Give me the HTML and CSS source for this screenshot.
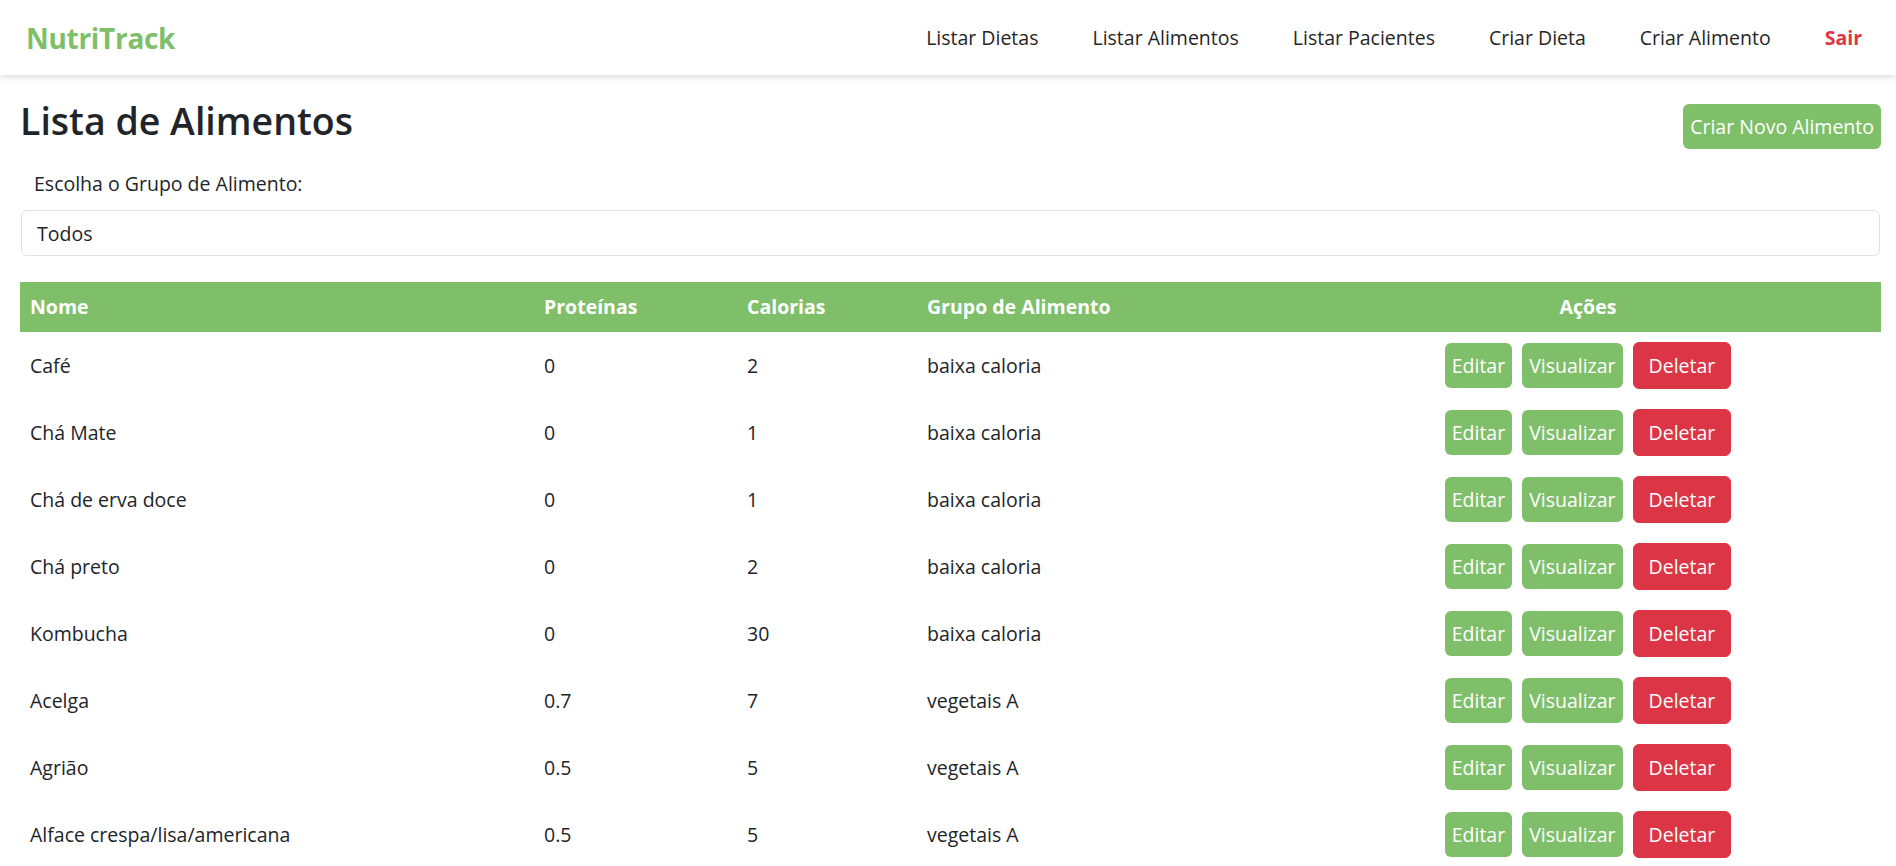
FILE: index.html
```html
<!DOCTYPE html>
<html lang="pt-BR">
<head>
<meta charset="utf-8">
<title>NutriTrack - Lista de Alimentos</title>
<link rel="stylesheet" href="styles.css">
</head>
<body>
<nav class="navbar">
  <a class="brand" href="#">NutriTrack</a>
  <ul class="nav-links">
    <li><a class="nav-link" href="#">Listar Dietas</a></li>
    <li><a class="nav-link" href="#">Listar Alimentos</a></li>
    <li><a class="nav-link" href="#">Listar Pacientes</a></li>
    <li><a class="nav-link" href="#">Criar Dieta</a></li>
    <li><a class="nav-link" href="#">Criar Alimento</a></li>
    <li><a class="nav-link logout" href="#">Sair</a></li>
  </ul>
</nav>
<main class="container">
  <div class="page-head">
    <h1 class="page-title">Lista de Alimentos</h1>
    <a class="btn btn-green btn-create" href="#">Criar Novo Alimento</a>
  </div>
  <label class="filter-label" for="grupo">Escolha o Grupo de Alimento:</label>
  <select class="filter-select" id="grupo"><option>Todos</option></select>
  <table class="food-table">
    <colgroup>
      <col class="c-nome"><col class="c-prot"><col class="c-cal"><col class="c-grupo"><col class="c-acoes">
    </colgroup>
    <thead>
      <tr><th>Nome</th><th>Proteínas</th><th>Calorias</th><th>Grupo de Alimento</th><th class="th-acoes">Ações</th></tr>
    </thead>
    <tbody>
      <tr><td>Café</td><td>0</td><td>2</td><td>baixa caloria</td><td><div class="actions"><a class="btn btn-green" href="#">Editar</a><a class="btn btn-green" href="#">Visualizar</a><a class="btn btn-red" href="#">Deletar</a></div></td></tr>
      <tr><td>Chá Mate</td><td>0</td><td>1</td><td>baixa caloria</td><td><div class="actions"><a class="btn btn-green" href="#">Editar</a><a class="btn btn-green" href="#">Visualizar</a><a class="btn btn-red" href="#">Deletar</a></div></td></tr>
      <tr><td>Chá de erva doce</td><td>0</td><td>1</td><td>baixa caloria</td><td><div class="actions"><a class="btn btn-green" href="#">Editar</a><a class="btn btn-green" href="#">Visualizar</a><a class="btn btn-red" href="#">Deletar</a></div></td></tr>
      <tr><td>Chá preto</td><td>0</td><td>2</td><td>baixa caloria</td><td><div class="actions"><a class="btn btn-green" href="#">Editar</a><a class="btn btn-green" href="#">Visualizar</a><a class="btn btn-red" href="#">Deletar</a></div></td></tr>
      <tr><td>Kombucha</td><td>0</td><td>30</td><td>baixa caloria</td><td><div class="actions"><a class="btn btn-green" href="#">Editar</a><a class="btn btn-green" href="#">Visualizar</a><a class="btn btn-red" href="#">Deletar</a></div></td></tr>
      <tr><td>Acelga</td><td>0.7</td><td>7</td><td>vegetais A</td><td><div class="actions"><a class="btn btn-green" href="#">Editar</a><a class="btn btn-green" href="#">Visualizar</a><a class="btn btn-red" href="#">Deletar</a></div></td></tr>
      <tr><td>Agrião</td><td>0.5</td><td>5</td><td>vegetais A</td><td><div class="actions"><a class="btn btn-green" href="#">Editar</a><a class="btn btn-green" href="#">Visualizar</a><a class="btn btn-red" href="#">Deletar</a></div></td></tr>
      <tr><td>Alface crespa/lisa/americana</td><td>0.5</td><td>5</td><td>vegetais A</td><td><div class="actions"><a class="btn btn-green" href="#">Editar</a><a class="btn btn-green" href="#">Visualizar</a><a class="btn btn-red" href="#">Deletar</a></div></td></tr>
    </tbody>
  </table>
</main>
</body>
</html>
```

FILE: styles.css
```css
* { box-sizing: border-box; }

html, body {
  margin: 0;
  padding: 0;
  background: #ffffff;
}

body {
  font-family: "Open Sans", "Noto Sans", "Liberation Sans", sans-serif;
  font-size: 19.5px;
  line-height: 30px;
  color: #212529;
  overflow: hidden;
}

a { text-decoration: none; }

.navbar {
  height: 75px;
  display: flex;
  align-items: center;
  justify-content: space-between;
  padding: 0 34px 0 26px;
  background: #ffffff;
  box-shadow: 0 2px 6px rgba(0, 0, 0, 0.14);
  position: relative;
  z-index: 2;
}

.brand {
  font-size: 28px;
  font-weight: 700;
  color: #7fbf6a;
  letter-spacing: -0.3px;
}

.nav-links {
  list-style: none;
  margin: 0;
  padding: 0;
  display: flex;
  gap: 54px;
}

.nav-link {
  font-size: 19.5px;
  font-weight: 500;
  color: #262626;
}

.nav-link.logout {
  color: #dc3545;
  font-weight: 700;
}

.container {
  padding: 0 15px 0 20px;
}

.page-head {
  display: flex;
  justify-content: space-between;
  align-items: flex-start;
  padding-top: 22px;
}

.page-title {
  margin: 0;
  font-size: 37.5px;
  line-height: 48px;
  font-weight: 600;
  color: #212529;
}

.btn {
  display: inline-block;
  font-size: 19.5px;
  line-height: 30px;
  color: #ffffff;
  border-radius: 6px;
  text-align: center;
  white-space: nowrap;
}

.btn-green {
  background: #7fbf6a;
  padding: 7.5px 7px;
}

.btn-create {
  margin-top: 7px;
}

.btn-red {
  background: #dc3545;
  border: 1px solid #dc3545;
  padding: 7.5px 15px;
}

.filter-label {
  display: block;
  margin: 20px 0 11px 14px;
  line-height: 30px;
}

.filter-select {
  display: block;
  height: 46px;
  margin: 0 1px;
  width: calc(100% - 2px);
  padding: 0 15px;
  font-family: inherit;
  font-size: 19.5px;
  color: #212529;
  background: #ffffff;
  border: 1px solid #dee2e6;
  border-radius: 6px;
  appearance: none;
  -webkit-appearance: none;
}

.food-table {
  width: 100%;
  margin-top: 26px;
  border-collapse: collapse;
  table-layout: fixed;
}

.c-nome { width: 514px; }
.c-prot { width: 203px; }
.c-cal { width: 180px; }
.c-grupo { width: 378px; }

.food-table th {
  background: #7fbf6a;
  color: #ffffff;
  font-weight: 700;
  text-align: left;
  padding: 10px;
  line-height: 30px;
}

.food-table th.th-acoes { text-align: center; }

.food-table td {
  padding: 10px;
  line-height: 30px;
  vertical-align: middle;
  color: #212529;
}

.actions {
  display: flex;
  justify-content: center;
  align-items: center;
  gap: 10px;
}
```
